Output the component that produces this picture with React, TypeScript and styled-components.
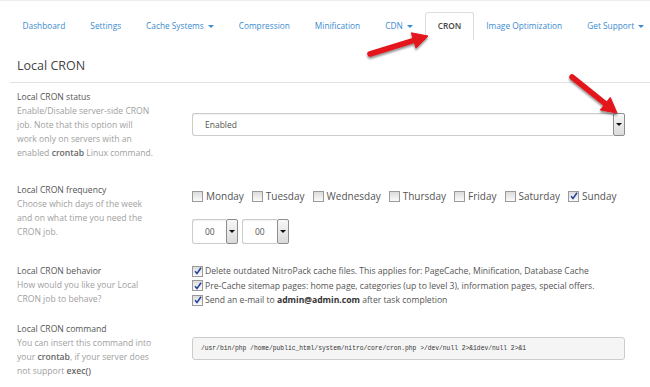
import React from 'react'
import styled, { createGlobalStyle } from 'styled-components'

const GlobalStyle = createGlobalStyle`
  html, body {
    margin: 0;
    padding: 0;
    background: #fff;
    font-family: "Open Sans", "Liberation Sans", sans-serif;
  }
`

const Page = styled.div`
  position: relative;
  width: 650px;
  height: 387px;
  overflow: hidden;
  box-sizing: border-box;
  border-top: 1px solid #ececec;
  padding-left: 10px;
`

const Tabs = styled.ul`
  display: flex;
  margin: 0;
  padding: 11px 0 0 0;
  list-style: none;
  border-bottom: 1px solid #ddd;
`

const Tab = styled.li<{ $active?: boolean }>`
  height: 26px;
  line-height: 26px;
  padding: 0 11.5px;
  margin-bottom: -1px;
  font-size: 8.3px;
  white-space: nowrap;
  color: ${({ $active }) => ($active ? '#444' : '#3b8bd0')};
  font-weight: ${({ $active }) => ($active ? 600 : 400)};
  background: #fff;
  border: 1px solid ${({ $active }) => ($active ? '#ddd' : 'transparent')};
  border-bottom-color: ${({ $active }) => ($active ? '#fff' : 'transparent')};
  border-radius: 3px 3px 0 0;
`

const Caret = styled.span`
  display: inline-block;
  margin-left: 4px;
  vertical-align: middle;
  border-top: 3px solid #3b8bd0;
  border-left: 3px solid transparent;
  border-right: 3px solid transparent;
`

const Heading = styled.h3`
  margin: 18px 0 0 0;
  padding: 0 0 8px 7px;
  font-size: 12.5px;
  line-height: 16px;
  font-weight: 400;
  color: #444;
  border-bottom: 1px solid #e3e3e3;
`

const Form = styled.div`
  padding: 7px 0 0 7px;
`

const Row = styled.div<{ $gap: number }>`
  display: grid;
  grid-template-columns: 175px 433px;
  margin-bottom: ${({ $gap }) => $gap}px;
`

const Info = styled.div`
  font-size: 8.6px;
  line-height: 14px;
`

const Label = styled.div`
  color: #555;
`

const Help = styled.div`
  color: #a0a0a0;
  white-space: nowrap;

  b {
    color: #666;
    font-weight: 600;
  }
`

const Field = styled.div<{ $top: number }>`
  padding-top: ${({ $top }) => $top}px;
`

const SelectWrap = styled.div<{ $width: number; $height: number }>`
  display: flex;
  width: ${({ $width }) => $width}px;
  height: ${({ $height }) => $height}px;
`

const SelectValue = styled.div`
  flex: 1;
  box-sizing: border-box;
  border: 1px solid #ccc;
  border-right: none;
  border-radius: 3px 0 0 3px;
  box-shadow: inset 0 1px 1px rgba(0, 0, 0, 0.06);
  padding-left: 12px;
  display: flex;
  align-items: center;
  font-size: 8.5px;
  color: #555;
`

const SelectButton = styled.div`
  width: 12px;
  box-sizing: border-box;
  border: 1px solid #8d8d8d;
  border-radius: 2px;
  background: linear-gradient(#f7f7f7, #dadada);
  display: flex;
  align-items: center;
  justify-content: center;

  &::after {
    content: '';
    border-top: 3px solid #111;
    border-left: 3px solid transparent;
    border-right: 3px solid transparent;
  }
`

const Days = styled.div`
  display: flex;
  gap: 8px;
  height: 14px;
  align-items: center;
`

const Day = styled.label`
  display: flex;
  align-items: center;
  gap: 3px;
  font-size: 10px;
  color: #555;
`

const TimeRow = styled.div`
  display: flex;
  gap: 4px;
  margin-top: 16px;
`

const Box = styled.span`
  width: 11px;
  height: 11px;
  box-sizing: border-box;
  flex: none;
  border: 1px solid #9a9a9a;
  background: linear-gradient(#dcdcdc, #fbfbfb);
  display: flex;
  align-items: center;
  justify-content: center;
`

const Options = styled.div`
  display: flex;
  flex-direction: column;
`

const Option = styled.label`
  display: flex;
  align-items: center;
  gap: 2px;
  height: 14.5px;
  font-size: 8.6px;
  color: #555;
  white-space: nowrap;

  b {
    color: #333;
    font-weight: 700;
  }
`

const Code = styled.div`
  box-sizing: border-box;
  height: 23px;
  border: 1px solid #ccc;
  border-radius: 3px;
  background: #f5f5f5;
  padding-left: 8px;
  display: flex;
  align-items: center;
  font-family: "Liberation Mono", "DejaVu Sans Mono", monospace;
  font-size: 6.3px;
  color: #333;
  white-space: nowrap;
`

const Overlay = styled.svg`
  position: absolute;
  left: 0;
  top: 0;
  pointer-events: none;
`

const Checkbox: React.FC<{ checked?: boolean }> = ({ checked }) => (
  <Box>
    {checked && (
      <svg width="8" height="8" viewBox="0 0 8 8">
        <path d="M1 4.2 L3 6.5 L7 0.8" fill="none" stroke="#24449a" strokeWidth="1.5" />
      </svg>
    )}
  </Box>
)

const Select: React.FC<{ value: string; width: number; height: number }> = ({ value, width, height }) => (
  <SelectWrap $width={width} $height={height}>
    <SelectValue>{value}</SelectValue>
    <SelectButton />
  </SelectWrap>
)

interface ArrowProps {
  x1: number
  y1: number
  x2: number
  y2: number
}

const Arrow: React.FC<ArrowProps> = ({ x1, y1, x2, y2 }) => {
  const dx = x2 - x1
  const dy = y2 - y1
  const len = Math.sqrt(dx * dx + dy * dy)
  const ux = dx / len
  const uy = dy / len
  const head = 15
  const half = 8
  const bx = x2 - ux * head
  const by = y2 - uy * head
  const p1 = `${bx - uy * half},${by + ux * half}`
  const p2 = `${bx + uy * half},${by - ux * half}`
  return (
    <g filter="url(#shadow)">
      <line x1={x1} y1={y1} x2={bx + ux * 2} y2={by + uy * 2} stroke="#e3141b" strokeWidth="5.5" strokeLinecap="round" />
      <polygon points={`${x2},${y2} ${p1} ${p2}`} fill="#e3141b" stroke="#e3141b" strokeWidth="1" strokeLinejoin="round" />
    </g>
  )
}

const days = ['Monday', 'Tuesday', 'Wednesday', 'Thursday', 'Friday', 'Saturday', 'Sunday']

export default function App() {
  return (
    <Page>
      <GlobalStyle />
      <Tabs>
        <Tab>Dashboard</Tab>
        <Tab>Settings</Tab>
        <Tab>Cache Systems<Caret /></Tab>
        <Tab>Compression</Tab>
        <Tab>Minification</Tab>
        <Tab>CDN<Caret /></Tab>
        <Tab $active>CRON</Tab>
        <Tab>Image Optimization</Tab>
        <Tab>Get Support<Caret /></Tab>
      </Tabs>
      <Heading>Local CRON</Heading>
      <Form>
        <Row $gap={23}>
          <Info>
            <Label>Local CRON status</Label>
            <Help>
              Enable/Disable server-side CRON<br />
              job. Note that this option will<br />
              work only on servers with an<br />
              enabled <b>crontab</b> Linux command.
            </Help>
          </Info>
          <Field $top={23}>
            <Select value="Enabled" width={433} height={23} />
          </Field>
        </Row>
        <Row $gap={20}>
          <Info>
            <Label>Local CRON frequency</Label>
            <Help>
              Choose which days of the week<br />
              and on what time you need the<br />
              CRON job.
            </Help>
          </Info>
          <Field $top={6}>
            <Days>
              {days.map((d) => (
                <Day key={d}>
                  <Checkbox checked={d === 'Sunday'} />
                  {d}
                </Day>
              ))}
            </Days>
            <TimeRow>
              <Select value="00" width={46} height={25} />
              <Select value="00" width={47} height={25} />
            </TimeRow>
          </Field>
        </Row>
        <Row $gap={14}>
          <Info>
            <Label>Local CRON behavior</Label>
            <Help>
              How would you like your Local<br />
              CRON job to behave?
            </Help>
          </Info>
          <Field $top={0}>
            <Options>
              <Option>
                <Checkbox checked />
                <span>Delete outdated NitroPack cache files. This applies for: PageCache, Minification, Database Cache</span>
              </Option>
              <Option>
                <Checkbox checked />
                <span>Pre-Cache sitemap pages: home page, categories (up to level 3), information pages, special offers.</span>
              </Option>
              <Option>
                <Checkbox checked />
                <span>Send an e-mail to <b>admin@admin.com</b> after task completion</span>
              </Option>
            </Options>
          </Field>
        </Row>
        <Row $gap={0}>
          <Info>
            <Label>Local CRON command</Label>
            <Help>
              You can insert this command into<br />
              your <b>crontab</b>, if your server does<br />
              not support <b>exec()</b>
            </Help>
          </Info>
          <Field $top={15}>
            <Code>/usr/bin/php /home/public_html/system/nitro/core/cron.php &gt;/dev/null 2&gt;&amp;1dev/null 2&gt;&amp;1</Code>
          </Field>
        </Row>
      </Form>
      <Overlay width="650" height="387" viewBox="0 0 650 387">
        <defs>
          <filter id="shadow" x="-20%" y="-20%" width="140%" height="160%">
            <feDropShadow dx="0" dy="2" stdDeviation="1.2" floodColor="#000" floodOpacity="0.45" />
          </filter>
        </defs>
        <Arrow x1={370} y1={53} x2={428} y2={35} />
        <Arrow x1={572} y1={76} x2={617} y2={112} />
      </Overlay>
    </Page>
  )
}
